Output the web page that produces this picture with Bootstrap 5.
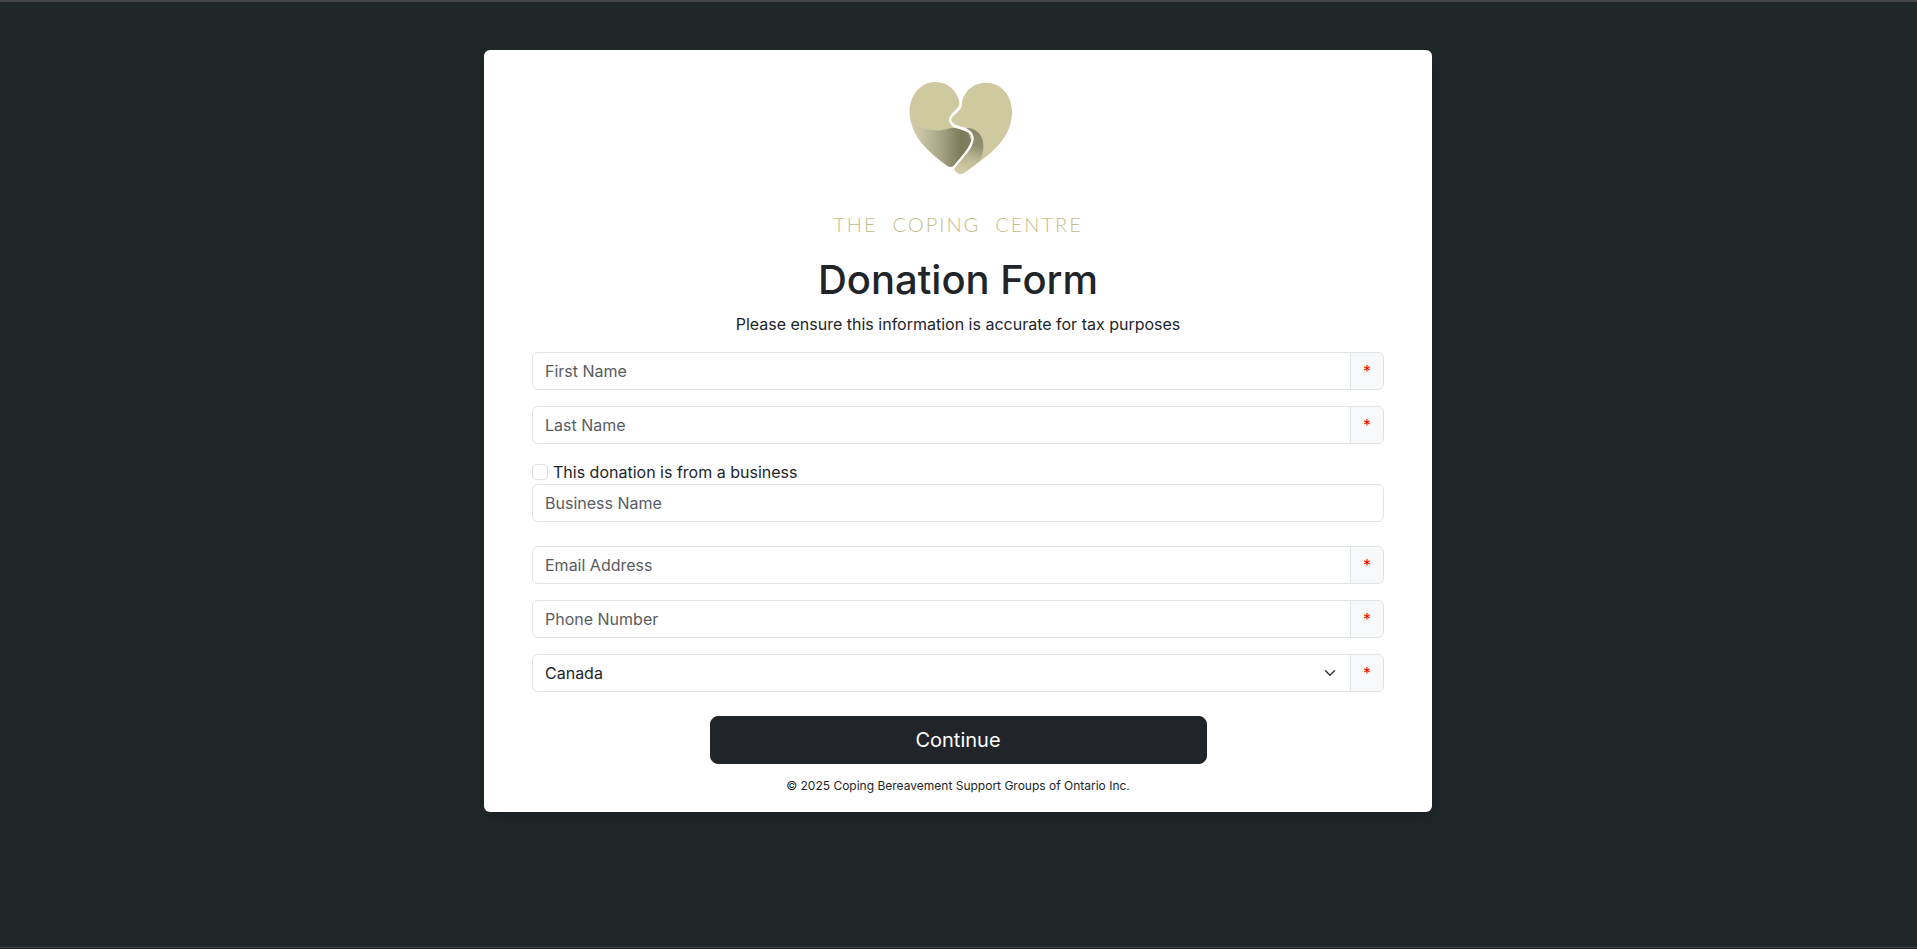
<!DOCTYPE html>
<html lang="en">
<head>
<meta charset="utf-8">
<meta name="viewport" content="width=device-width, initial-scale=1">
<title>Donation Form</title>
<link href="https://cdn.jsdelivr.net/npm/bootstrap@5.3.0/dist/css/bootstrap.min.css" rel="stylesheet">
<style>
  body {
    font-family: Inter, "Liberation Sans", sans-serif;
    background: #1f2729;
    border-top: 2px solid #454446;
    border-bottom: 1px solid #1c1518;
    box-shadow: inset 0 -1px #454446;
    color: #212529;
  }
  .page { padding: 48px 11px 48px 10px; }
  .panel {
    min-width: 320px;
    padding: 30px 48px 17px;
    border-radius: 6px;
    box-shadow: 0 8px 16px rgba(0, 0, 0, .15);
  }
  .logo-heart { width: 110px; height: 96px; }
  .logo-name {
    gap: 15px;
    margin: 36px 0 20px;
    font: 300 20px/24px Lato, sans-serif;
    letter-spacing: 2px;
    color: #c3bc8c;
  }
  .form-title { font-size: 40px; line-height: 48px; }
  .form-control, .form-select, .input-group-text { border-color: #dee2e6; }
  .form-control::placeholder { color: #595c5f; }
  .input-group-text { background: #f8f9fa; color: #f00; }
  .form-check-input { border-color: #dee2e6; }
  .check-row { gap: 5px; }
  .legal { font-size: 12px; line-height: 18px; margin-top: 13px; }
</style>
</head>
<body class="min-vh-100">
<main class="page">
  <div class="panel bg-white w-50 mx-auto">
    <header class="text-center">
      <svg class="logo-heart d-block mx-auto" viewBox="40 30 330 288" role="img" aria-label="The Coping Centre heart">
        <defs>
          <linearGradient id="valley" x1="62" x2="250" y1="0" y2="0" gradientUnits="userSpaceOnUse">
            <stop offset="0" stop-color="#d3cda9"/>
            <stop offset=".2" stop-color="#c5c1a0"/>
            <stop offset=".55" stop-color="#a09d7e"/>
            <stop offset=".8" stop-color="#7c7b5c"/>
            <stop offset="1" stop-color="#7f7e5f"/>
          </linearGradient>
          <linearGradient id="bank" x1="262" x2="228" y1="190" y2="305" gradientUnits="userSpaceOnUse">
            <stop offset="0" stop-color="#8b8969"/>
            <stop offset=".3" stop-color="#918f70"/>
            <stop offset=".65" stop-color="#bdb894"/>
            <stop offset="1" stop-color="#d1cba6"/>
          </linearGradient>
        </defs>
        <path fill="#cfc9a0" d="M60 124C60 74 94 36 137 36c37 0 65 25 73 62 2 18-31 29-31 52 0 10 7 19 17 24-40 8-98 18-132-17C61 148 60 137 60 124Z"/>
        <path fill="url(#valley)" d="M60 132c8 32 43 49 81 49 24 0 36-8 57-7 28 8 47 13 47 32 0 22-29 52-53 82-5 5-13 4-20-1C119 248 64 202 60 132Z"/>
        <path fill="#cfc9a0" d="M216 103c4-36 33-65 73-65 44 0 78 37 78 87 0 70-48 114-100 152l-35-102c-15-6-48-10-48-25 0-16 31-22 32-47Z"/>
        <path fill="url(#bank)" d="M229 174c28-2 52 18 52 52 0 19-4 34-12 49-17 14-32 25-47 35-4 3-12 3-15 1l-11-8c-3-3-3-7 0-11 20-26 55-56 55-84 0-17-7-27-22-34Z"/>
        <path fill="none" stroke="#fff" stroke-width="6" d="M213 98c4 25-31 29-31 51 0 30 67 19 67 56 0 29-35 57-57 89"/>
      </svg>
      <div class="logo-name d-flex justify-content-center"><span>THE</span> <span>COPING</span> <span>CENTRE</span></div>
      <h1 class="form-title mb-2">Donation Form</h1>
      <p class="mb-3">Please ensure this information is accurate for tax purposes</p>
    </header>
    <form>
      <div class="input-group mb-3">
        <input type="text" class="form-control" placeholder="First Name" aria-label="First Name" required>
        <span class="input-group-text">*</span>
      </div>
      <div class="input-group mb-3">
        <input type="text" class="form-control" placeholder="Last Name" aria-label="Last Name" required>
        <span class="input-group-text">*</span>
      </div>
      <div class="check-row d-flex">
        <input class="form-check-input flex-shrink-0" type="checkbox" id="business">
        <label for="business">This donation is from a business</label>
      </div>
      <input type="text" class="form-control mb-4" placeholder="Business Name" aria-label="Business Name">
      <div class="input-group mb-3">
        <input type="email" class="form-control" placeholder="Email Address" aria-label="Email Address" required>
        <span class="input-group-text">*</span>
      </div>
      <div class="input-group mb-3">
        <input type="tel" class="form-control" placeholder="Phone Number" aria-label="Phone Number" required>
        <span class="input-group-text">*</span>
      </div>
      <div class="input-group mb-4">
        <select class="form-select" aria-label="Country">
          <option selected>Canada</option>
          <option>United States</option>
        </select>
        <span class="input-group-text">*</span>
      </div>
      <div class="row gx-0 justify-content-center">
        <button type="submit" class="btn btn-dark btn-lg col-7">Continue</button>
      </div>
    </form>
    <footer class="legal text-center">© 2025 Coping Bereavement Support Groups of Ontario Inc.</footer>
  </div>
</main>
<script src="https://cdn.jsdelivr.net/npm/bootstrap@5.3.0/dist/js/bootstrap.bundle.min.js"></script>
</body>
</html>
